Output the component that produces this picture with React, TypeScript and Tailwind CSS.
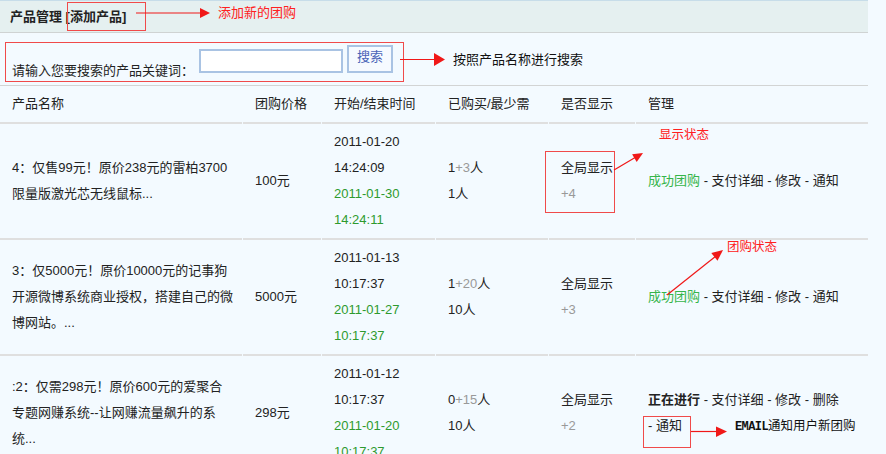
import React from "react";

type Row = {
  name: string[];
  price: string;
  start: [string, string];
  end: [string, string];
  bought: string;
  plus: string;
  min: string;
  shown: string;
  running: boolean;
};

const rows: Row[] = [
  {
    name: ["4：仅售99元！原价238元的雷柏3700", "限量版激光芯无线鼠标..."],
    price: "100元",
    start: ["2011-01-20", "14:24:09"],
    end: ["2011-01-30", "14:24:11"],
    bought: "1",
    plus: "+3",
    min: "1人",
    shown: "+4",
    running: false,
  },
  {
    name: ["3：仅5000元！原价10000元的记事狗", "开源微博系统商业授权，搭建自己的微", "博网站。..."],
    price: "5000元",
    start: ["2011-01-13", "10:17:37"],
    end: ["2011-01-27", "10:17:37"],
    bought: "1",
    plus: "+20",
    min: "10人",
    shown: "+3",
    running: false,
  },
  {
    name: [":2：仅需298元！原价600元的爱聚合", "专题网赚系统--让网赚流量飙升的系", "统..."],
    price: "298元",
    start: ["2011-01-12", "10:17:37"],
    end: ["2011-01-20", "10:17:37"],
    bought: "0",
    plus: "+15",
    min: "10人",
    shown: "+2",
    running: true,
  },
];

const cell = "border-b-2 border-[#dfdfdf] pl-3 flex flex-col justify-center";
const headCell = "border-b-2 border-[#dfdfdf] pl-3 flex items-center h-[38px]";

function Annotations() {
  const red = "#f01818";
  return (
    <>
      <svg
        className="absolute left-0 top-0 pointer-events-none"
        width={886}
        height={454}
        viewBox="0 0 886 454"
      >
        <g fill="none" stroke="#f04a4a" strokeWidth={1}>
          <rect x={67.5} y={2.5} width={78} height={28} />
          <rect x={5.5} y={42.5} width={398} height={39} />
          <rect x={545.5} y={151.5} width={69} height={61} />
          <rect x={643.5} y={416.5} width={47} height={31} />
        </g>
        <g stroke={red} strokeWidth={1.2}>
          <line x1={136} y1={13} x2={201} y2={13} />
          <line x1={400} y1={59.5} x2={435} y2={59.5} />
          <line x1={614} y1={170} x2={636} y2={157} />
          <line x1={667} y1={295} x2={716} y2={256} />
          <line x1={691} y1={431.5} x2={717} y2={431.5} />
        </g>
        <g fill={red}>
          <polygon points="200,8 210,13 200,18" />
          <polygon points="434,53 445,59.5 434,66" />
          <polygon points="643,153 636.7,162 632.1,154.2" />
          <polygon points="723,250 717.5,260.8 711.3,253" />
          <polygon points="716,426.5 727,431.5 716,437" />
        </g>
      </svg>
      <span className="absolute left-[218px] top-[4px] text-[13px] leading-[18px] text-[#ff2020]">
        添加新的团购
      </span>
      <span className="absolute left-[453px] top-[51px] text-[13px] leading-[18px] text-[#111]">
        按照产品名称进行搜索
      </span>
      <span className="absolute left-[659px] top-[126px] text-[12.5px] leading-[18px] text-[#ff2020]">
        显示状态
      </span>
      <span className="absolute left-[727px] top-[238px] text-[12.5px] leading-[18px] text-[#ff2020]">
        团购状态
      </span>
      <span className="absolute left-[735px] top-[417px] text-[12.5px] leading-[18px] text-[#111]">
        <span className="font-['Liberation_Mono',monospace] font-bold text-[12px] tracking-[-0.6px]">EMAIL</span>通知用户新团购
      </span>
    </>
  );
}

export default function App() {
  return (
    <div className="relative w-[886px] h-[454px] overflow-hidden bg-[#f3faff] text-[13px] text-[#222] font-['Liberation_Sans','Noto_Sans_CJK_SC',sans-serif]">
      <div className="w-[868px]">
        {/* title bar */}
        <div className="h-[33px] border-t border-[#c7dde9] border-b border-b-[#cfd3d3] bg-[#e5f0f0] flex items-center pl-[10px] font-bold text-[13px]">
          产品管理 [添加产品]
        </div>

        {/* search bar */}
        <div className="h-[53px] border-b border-[#d2d4d4] flex items-end pb-[12px] pl-[12px]">
          <span className="leading-[16px] mb-[-6px]">请输入您要搜索的产品关键词：</span>
          <input
            className="ml-[5px] w-[144px] h-[24px] border-2 border-[#a9c3e3] bg-white outline-none"
            type="text"
          />
          <button className="ml-[4px] w-[46px] h-[28px] border-2 border-[#a9c3e3] bg-[#f6faff] text-[#4a64b8] text-[13px] leading-[20px] pb-[4px]">
            搜索
          </button>
        </div>

        {/* list */}
        <div className="grid grid-cols-[242px_78px_113px_112px_86px_232px] gap-x-px">
          <div className={headCell}>产品名称</div>
          <div className={headCell}>团购价格</div>
          <div className={headCell}>开始/结束时间</div>
          <div className={headCell}>已购买/最少需</div>
          <div className={headCell}>是否显示</div>
          <div className={headCell}>管理</div>

          {rows.map((r, i) => (
            <React.Fragment key={i}>
              <div className={cell + " leading-[26px] py-[5px]"}>
                {r.name.map((l, j) => (
                  <div key={j} className="whitespace-nowrap">{l}</div>
                ))}
              </div>
              <div className={cell + " leading-[26px] py-[5px]"}>{r.price}</div>
              <div className={cell + " leading-[26px] py-[5px]"}>
                <div>{r.start[0]}</div>
                <div>{r.start[1]}</div>
                <div className="text-[#2e9a2e]">{r.end[0]}</div>
                <div className="text-[#2e9a2e]">{r.end[1]}</div>
              </div>
              <div className={cell + " leading-[26px] py-[5px]"}>
                <div>
                  {r.bought}
                  <span className="text-[#999]">{r.plus}</span>人
                </div>
                <div>{r.min}</div>
              </div>
              <div className={cell + " leading-[26px] py-[5px]"}>
                <div>全局显示</div>
                <div className="text-[#999]">{r.shown}</div>
              </div>
              <div className={cell + " leading-[26px] py-[5px] whitespace-nowrap"}>
                {r.running ? (
                  <>
                    <div>
                      <span className="font-bold">正在进行</span> - 支付详细 - 修改 - 删除
                    </div>
                    <div>- 通知</div>
                  </>
                ) : (
                  <div>
                    <span className="text-[#36b54a]">成功团购</span> - 支付详细 - 修改 - 通知
                  </div>
                )}
              </div>
            </React.Fragment>
          ))}
        </div>
      </div>

      <Annotations />
    </div>
  );
}
